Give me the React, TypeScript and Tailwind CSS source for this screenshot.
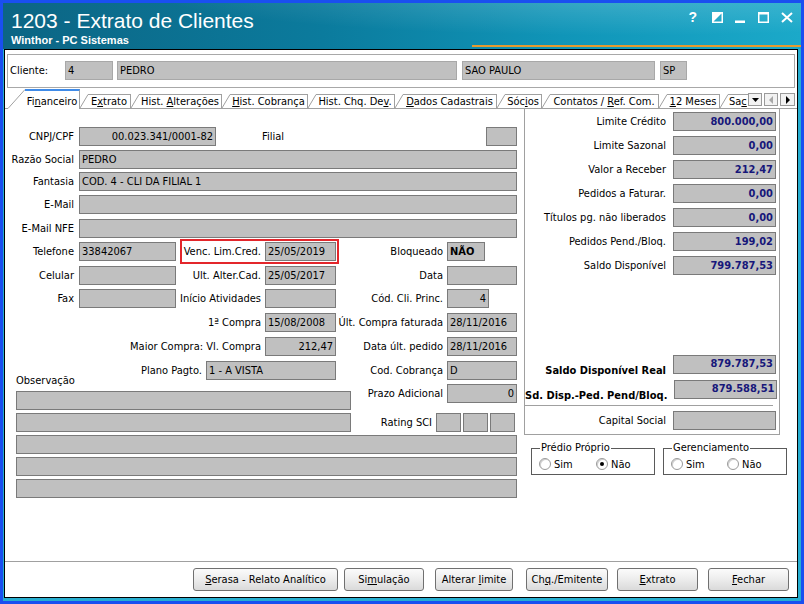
import React from "react";

type Kids = { children?: React.ReactNode };

const fieldBase =
  "h-[19px] shrink-0 bg-[#c0c0c0] border border-[#7a7a7a] flex items-center px-[2px] whitespace-nowrap overflow-hidden";

function Fld({ cls = "", right = false, children }: Kids & { cls?: string; right?: boolean }) {
  return <div className={`${fieldBase} ${right ? "justify-end" : ""} ${cls}`}>{children}</div>;
}

function Lbl({ cls = "", children }: Kids & { cls?: string }) {
  return <div className={`flex justify-end whitespace-nowrap shrink-0 ${cls}`}>{children}</div>;
}

function TitleBar() {
  return (
    <div className="h-[46px] shrink-0 flex text-white bg-[radial-gradient(ellipse_at_78%_-30%,rgba(255,255,255,0.22),transparent_55%),linear-gradient(90deg,#0c6584_0%,#0b7b9d_40%,#1095b8_70%,#1ba9c9_100%)]">
      <div className="flex flex-col pl-[8px] pt-[6px] font-['Liberation_Sans',Arial,sans-serif]">
        <div className="text-[21px] leading-[24px]">1203 - Extrato de Clientes</div>
        <div className="mt-[1px] text-[11px] leading-[13px] font-bold">Winthor - PC Sistemas</div>
      </div>
      <div className="ml-auto w-[329px] flex flex-col">
        <div className="mt-[8px] mr-[8px] flex items-center justify-end h-[12px]">
          <span className="font-['Liberation_Sans',Arial,sans-serif] font-bold text-[14px] leading-[12px]">?</span>
          <svg width="11" height="11" viewBox="0 0 11 11" className="ml-[15px]">
            <rect x="0.75" y="0.75" width="9.5" height="9.5" fill="none" stroke="#fff" strokeWidth="1.5" />
            <polygon points="0,0 11,0 0,11" fill="#fff" />
          </svg>
          <svg width="10" height="11" viewBox="0 0 10 11" className="ml-[12px]">
            <rect x="0" y="8.5" width="10" height="2.5" fill="#fff" />
          </svg>
          <svg width="11" height="11" viewBox="0 0 11 11" className="ml-[13px]">
            <rect x="0.75" y="0.75" width="9.5" height="9.5" fill="none" stroke="#fff" strokeWidth="1.5" />
            <rect x="0" y="0" width="11" height="2.5" fill="#fff" />
          </svg>
          <svg width="12" height="11" viewBox="0 0 12 11" className="ml-[12px]">
            <path d="M1 1 L11 10 M11 1 L1 10" stroke="#fff" strokeWidth="2" />
          </svg>
        </div>
        <div className="mt-auto mb-[2px] h-[2px] bg-[#e59a2f]" />
      </div>
    </div>
  );
}

function ClientBar() {
  return (
    <div className="mt-[4px] mx-[2px] h-[34px] shrink-0 border border-[#a8a8a8] flex items-start pt-[6px] pl-[2px]">
      <div className="w-[55px] h-[19px] flex items-center">Cliente:</div>
      <Fld cls="w-[48px] border-[#a8a8a8]">4</Fld>
      <Fld cls="ml-[4px] w-[340px] border-[#a8a8a8]">PEDRO</Fld>
      <Fld cls="ml-[5px] w-[193px] border-[#a8a8a8]">SAO PAULO</Fld>
      <Fld cls="ml-[5px] w-[27px] border-[#a8a8a8]">SP</Fld>
    </div>
  );
}

function Slant() {
  return (
    <svg width="8" height="14" viewBox="0 0 8 14" className="shrink-0">
      <line x1="0" y1="14" x2="8" y2="0.5" stroke="#a0a0a0" />
    </svg>
  );
}

function Tab({ cls, children }: Kids & { cls: string }) {
  return (
    <div className={`flex h-[14px] shrink-0 ${cls}`}>
      <Slant />
      <div className="flex-1 flex items-center justify-center border-t border-r border-[#a0a0a0] whitespace-nowrap leading-[12px]">
        <span>{children}</span>
      </div>
    </div>
  );
}

function ScrollBtn({ children, cls = "" }: Kids & { cls?: string }) {
  return (
    <div
      className={`self-start mt-[4px] h-[13px] border border-[#9a9a9a] bg-[#f2f2f2] flex items-center justify-center shrink-0 ${cls}`}
    >
      {children}
    </div>
  );
}

function TabStrip() {
  return (
    <div className="mt-[1px] h-[19px] shrink-0 flex items-end pl-[3px] pr-[2px]">
      <div className="relative z-10 -mb-px flex h-[20px] w-[72px] shrink-0 bg-white">
        <svg width="17" height="20" viewBox="0 0 17 20" className="shrink-0">
          <line x1="0" y1="19.5" x2="17" y2="0.5" stroke="#a0a0a0" />
        </svg>
        <div className="flex-1 flex items-center justify-center border-t-2 border-t-[#3f8be8] border-r border-r-[#a0a0a0] pt-[3px] whitespace-nowrap">
          <span>
            Fi<span className="underline">n</span>anceiro
          </span>
        </div>
      </div>
      <Tab cls="w-[51px]">
        E<span className="underline">x</span>trato
      </Tab>
      <Tab cls="w-[91px]">
        Hist. <span className="underline">A</span>lterações
      </Tab>
      <Tab cls="w-[86px]">
        <span className="underline">H</span>ist. Cobrança
      </Tab>
      <Tab cls="w-[87px]">
        Hist. Chq. De<span className="underline">v</span>.
      </Tab>
      <Tab cls="w-[102px]">
        <span className="underline">D</span>ados Cadastrais
      </Tab>
      <Tab cls="w-[45px]">
        Sóc<span className="underline">i</span>os
      </Tab>
      <Tab cls="w-[117px]">
        Contatos / <span className="underline">R</span>ef. Com.
      </Tab>
      <Tab cls="w-[61px]">
        <span className="underline">1</span>2 Meses
      </Tab>
      <div className="flex h-[14px] w-[28px] shrink-0">
        <Slant />
        <div className="flex-1 border-t border-[#a0a0a0] flex items-center pl-[1px] whitespace-nowrap leading-[12px]">
          <span>
            Sa<span className="underline">c</span>
          </span>
        </div>
      </div>
      <ScrollBtn cls="w-[14px]">
        <svg width="7" height="4" viewBox="0 0 7 4">
          <polygon points="0,0 7,0 3.5,4" fill="#000" />
        </svg>
      </ScrollBtn>
      <ScrollBtn cls="ml-[2px] w-[14px]">
        <svg width="4" height="8" viewBox="0 0 4 8">
          <polygon points="4,0 4,8 0,4" fill="#a8a8a8" />
        </svg>
      </ScrollBtn>
      <ScrollBtn cls="ml-[2px] w-[15px]">
        <svg width="4" height="8" viewBox="0 0 4 8">
          <polygon points="0,0 0,8 4,4" fill="#000" />
        </svg>
      </ScrollBtn>
    </div>
  );
}

function Radio({ checked = false }: { checked?: boolean }) {
  return (
    <span className="w-[12px] h-[12px] shrink-0 rounded-full border border-[#9a9a9a] bg-white flex items-center justify-center shadow-[inset_1px_1px_0_#d0d0d0]">
      {checked && <span className="w-[4px] h-[4px] rounded-full bg-black" />}
    </span>
  );
}

function Group({
  title,
  optWidth,
  sim,
  nao,
}: {
  title: string;
  optWidth: string;
  sim: boolean;
  nao: boolean;
}) {
  return (
    <div className="w-[124px] h-[27px] shrink-0 border border-[#5a5a5a] flex flex-col">
      <div className="-mt-[8px] ml-[8px] self-start bg-white px-[1px] leading-[13px]">{title}</div>
      <div className="mt-[3px] h-[14px] flex items-center pl-[7px]">
        <div className={`flex items-center gap-[3px] ${optWidth}`}>
          <Radio checked={sim} />
          <span>Sim</span>
        </div>
        <div className="flex items-center gap-[3px]">
          <Radio checked={nao} />
          <span>Não</span>
        </div>
      </div>
    </div>
  );
}

function MoneyRow({ label, value, cls = "" }: { label: string; value: string; cls?: string }) {
  return (
    <div className={`flex items-center h-[19px] pr-[3px] ${cls}`}>
      <Lbl cls="flex-1">{label}</Lbl>
      <Fld cls="ml-[7px] w-[103px] font-bold text-[#17177a]" right>
        {value}
      </Fld>
    </div>
  );
}

function LeftForm() {
  return (
    <div className="ml-[7px] w-[505px] shrink-0 pt-[18px] flex flex-col">
      <div className="flex items-center h-[19px]">
        <Lbl cls="w-[62px]">CNPJ/CPF</Lbl>
        <Fld cls="ml-[5px] w-[137px]" right>
          00.023.341/0001-82
        </Fld>
        <span className="ml-[46px]">Filial</span>
        <Fld cls="ml-auto w-[31px]" />
      </div>
      <div className="mt-[4px] flex items-center h-[19px]">
        <Lbl cls="w-[62px]">Razão Social</Lbl>
        <Fld cls="ml-[5px] flex-1 shrink">PEDRO</Fld>
      </div>
      <div className="mt-[3px] flex items-center h-[19px]">
        <Lbl cls="w-[62px]">Fantasia</Lbl>
        <Fld cls="ml-[5px] flex-1 shrink">COD. 4 - CLI DA FILIAL 1</Fld>
      </div>
      <div className="mt-[4px] flex items-center h-[19px]">
        <Lbl cls="w-[62px]">E-Mail</Lbl>
        <Fld cls="ml-[5px] flex-1 shrink" />
      </div>
      <div className="mt-[5px] flex items-center h-[19px]">
        <Lbl cls="w-[62px]">E-Mail NFE</Lbl>
        <Fld cls="ml-[5px] flex-1 shrink" />
      </div>
      <div className="mt-[4px] flex items-center h-[19px]">
        <Lbl cls="w-[62px]">Telefone</Lbl>
        <Fld cls="ml-[5px] w-[97px]">33842067</Fld>
        <div className="ml-[7px] w-[153px] h-[19px] flex items-center outline-2 outline-solid outline-offset-[1px] outline-[#e3262b]">
          <Lbl cls="flex-1">Venc. Lim.Cred.</Lbl>
          <Fld cls="ml-[4px] w-[71px]">25/05/2019</Fld>
        </div>
        <Lbl cls="w-[107px]">Bloqueado</Lbl>
        <Fld cls="ml-[4px] w-[38px] font-bold">NÃO</Fld>
      </div>
      <div className="mt-[5px] flex items-center h-[19px]">
        <Lbl cls="w-[62px]">Celular</Lbl>
        <Fld cls="ml-[5px] w-[97px]" />
        <Lbl cls="w-[85px]">Ult. Alter.Cad.</Lbl>
        <Fld cls="ml-[4px] w-[71px]">25/05/2017</Fld>
        <Lbl cls="w-[107px]">Data</Lbl>
        <Fld cls="ml-[4px] w-[70px]" />
      </div>
      <div className="mt-[4px] flex items-center h-[19px]">
        <Lbl cls="w-[62px]">Fax</Lbl>
        <Fld cls="ml-[5px] w-[97px]" />
        <Lbl cls="w-[85px]">Início Atividades</Lbl>
        <Fld cls="ml-[4px] w-[71px]" />
        <Lbl cls="w-[107px]">Cód. Cli. Princ.</Lbl>
        <Fld cls="ml-[4px] w-[42px]" right>
          4
        </Fld>
      </div>
      <div className="mt-[5px] flex items-center h-[19px]">
        <Lbl cls="w-[249px]">1ª Compra</Lbl>
        <Fld cls="ml-[4px] w-[71px]">15/08/2008</Fld>
        <Lbl cls="w-[107px]">Últ. Compra faturada</Lbl>
        <Fld cls="ml-[4px] w-[70px]">28/11/2016</Fld>
      </div>
      <div className="mt-[5px] flex items-center h-[19px]">
        <Lbl cls="w-[249px]">Maior Compra: Vl. Compra</Lbl>
        <Fld cls="ml-[4px] w-[71px]" right>
          212,47
        </Fld>
        <Lbl cls="w-[107px]">Data últ. pedido</Lbl>
        <Fld cls="ml-[4px] w-[70px]">28/11/2016</Fld>
      </div>
      <div className="mt-[5px] flex items-center h-[19px]">
        <Lbl cls="w-[190px]">Plano Pagto.</Lbl>
        <Fld cls="ml-[4px] w-[130px]">1 - A VISTA</Fld>
        <Lbl cls="w-[107px]">Cod. Cobrança</Lbl>
        <Fld cls="ml-[4px] w-[70px]">D</Fld>
      </div>
      <div className="mt-[4px] flex">
        <div className="ml-[4px] w-[335px] shrink-0 flex flex-col">
          <div className="-mt-[10px] h-[14px] leading-[14px]">Observação</div>
          <Fld cls="mt-[3px] w-full" />
          <Fld cls="mt-[3px] w-full" />
        </div>
        <div className="flex-1 flex flex-col">
          <div className="flex items-center h-[19px]">
            <Lbl cls="flex-1">Prazo Adicional</Lbl>
            <Fld cls="ml-[4px] w-[70px]" right>
              0
            </Fld>
          </div>
          <div className="mt-[10px] flex items-center h-[19px] pr-[2px]">
            <Lbl cls="flex-1">Rating SCI</Lbl>
            <Fld cls="ml-[4px] w-[25px]" />
            <Fld cls="ml-[2px] w-[25px]" />
            <Fld cls="ml-[2px] w-[25px]" />
          </div>
        </div>
      </div>
      <Fld cls="mt-[3px] ml-[4px] w-[501px]" />
      <Fld cls="mt-[3px] ml-[4px] w-[501px]" />
      <Fld cls="mt-[3px] ml-[4px] w-[501px]" />
    </div>
  );
}

function RightSide() {
  return (
    <div className="ml-[7px] w-[264px] shrink-0 flex flex-col">
      <div className="w-[256px] h-[326px] border-l border-r border-b border-[#a0a0a0] flex flex-col pt-[3px]">
        <MoneyRow label="Limite Crédito" value="800.000,00" />
        <MoneyRow cls="mt-[5px]" label="Limite Sazonal" value="0,00" />
        <MoneyRow cls="mt-[5px]" label="Valor a Receber" value="212,47" />
        <MoneyRow cls="mt-[5px]" label="Pedidos a Faturar." value="0,00" />
        <MoneyRow cls="mt-[5px]" label="Títulos pg. não liberados" value="0,00" />
        <MoneyRow cls="mt-[5px]" label="Pedidos Pend./Bloq." value="199,02" />
        <MoneyRow cls="mt-[5px]" label="Saldo Disponível" value="799.787,53" />
        <div className="mt-[80px] flex items-end h-[19px] pr-[3px]">
          <Lbl cls="flex-1 font-bold -mb-[3px]">Saldo Disponível Real</Lbl>
          <Fld cls="ml-[7px] w-[103px] font-bold text-[#17177a] items-start! pt-[1px]" right>
            879.787,53
          </Fld>
        </div>
        <div className="mt-[6px] flex items-end h-[19px] pr-[3px]">
          <Lbl cls="flex-1 font-bold -mb-[3px]">Sd. Disp.-Ped. Pend/Bloq.</Lbl>
          <Fld cls="ml-[7px] w-[103px] font-bold text-[#17177a] items-start! pt-[1px]" right>
            879.588,51
          </Fld>
        </div>
        <div className="mt-[6px] mr-[6px] h-px bg-[#a0a0a0]" />
        <div className="mt-[5px] flex items-center h-[19px] pr-[3px]">
          <Lbl cls="flex-1">Capital Social</Lbl>
          <Fld cls="ml-[7px] w-[103px]" />
        </div>
      </div>
      <div className="mt-[13px] pl-[7px] flex">
        <Group title="Prédio Próprio" optWidth="w-[57px]" sim={false} nao={true} />
        <div className="ml-[8px]">
          <Group title="Gerenciamento" optWidth="w-[56px]" sim={false} nao={false} />
        </div>
      </div>
    </div>
  );
}

function Btn({ cls, children }: Kids & { cls: string }) {
  return (
    <div
      className={`h-[23px] shrink-0 border border-[#707070] rounded-[3px] bg-[linear-gradient(180deg,#fbfbfb_0%,#ececec_50%,#dadada_100%)] flex items-center justify-center whitespace-nowrap ${cls}`}
    >
      <span>{children}</span>
    </div>
  );
}

function ButtonBar() {
  return (
    <div className="h-[35px] shrink-0 flex items-start pt-[6px] pl-[188px]">
      <Btn cls="w-[145px]">
        <span className="underline">S</span>erasa - Relato Analítico
      </Btn>
      <Btn cls="ml-[6px] w-[80px]">
        Si<span className="underline">m</span>ulação
      </Btn>
      <Btn cls="ml-[11px] w-[78px]">
        Alterar <span className="underline">l</span>imite
      </Btn>
      <Btn cls="ml-[13px] w-[82px]">
        Ch<span className="underline">q</span>./Emitente
      </Btn>
      <Btn cls="ml-[9px] w-[81px]">
        <span className="underline">E</span>xtrato
      </Btn>
      <Btn cls="ml-[10px] w-[81px]">
        <span className="underline">F</span>echar
      </Btn>
    </div>
  );
}

export default function App() {
  return (
    <div className="w-[804px] h-[604px] bg-[#1a4ff0] p-[3px] text-[11px] leading-[13px] text-black font-['DejaVu_Sans_Condensed','Liberation_Sans',sans-serif]">
      <div className="h-full flex flex-col bg-[#27aed0]">
        <TitleBar />
        <div className="flex-1 min-h-0 ml-[1px] mr-[3px] mb-[3px] bg-white border border-black flex flex-col">
          <ClientBar />
          <TabStrip />
          <div className="flex-1 min-h-0 flex border-t border-[#a0a0a0]">
            <LeftForm />
            <RightSide />
          </div>
          <div className="h-px shrink-0 bg-[#a0a0a0]" />
          <ButtonBar />
        </div>
      </div>
    </div>
  );
}
